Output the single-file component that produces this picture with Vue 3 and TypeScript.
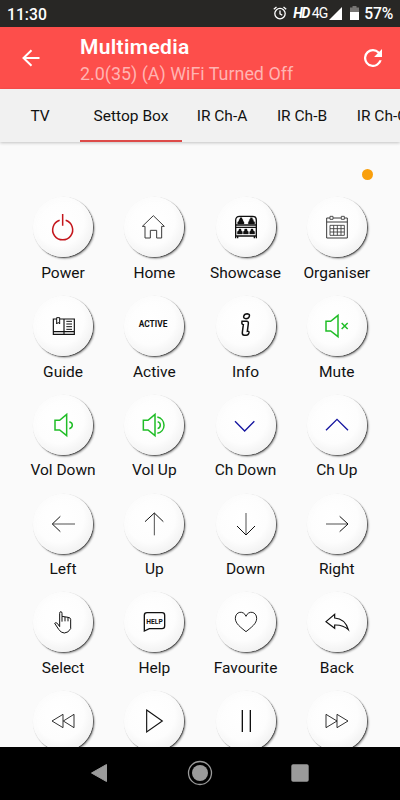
<script setup lang="ts">
interface Stroke {
  d: string
  w?: number
  fill?: boolean
}
interface RemoteKey {
  id: string
  label?: string
  tone?: 'red' | 'green' | 'blue' | 'soft'
  strokes: Stroke[]
  text?: { value: string; x: number; y: number; size: number; length: number }
}

const tabs: string[] = ['TV', 'Settop Box', 'IR Ch-A', 'IR Ch-B', 'IR Ch-C']
const activeTab = 'Settop Box'

// Icon paths are drawn around the origin, three units to a pixel.
const keys: RemoteKey[] = [
  { id: 'power', label: 'Power', tone: 'red', strokes: [{ d: 'M-10 -20 A30 30 0 1 0 8 -20 M-1 -39 V-4', w: 4.5 }] },
  { id: 'home', label: 'Home', tone: 'soft', strokes: [{ d: 'M-27 -2 H-35 L-2 -34 L31 -2 H23 V33 H8 V10 H-11 V33 H-27 Z', w: 3 }] },
  {
    id: 'showcase',
    label: 'Showcase',
    strokes: [
      { d: 'M-31 34 V-20 Q-31 -32 -19 -32 H19 Q31 -32 31 -20 V34 M-25 34 V25 M25 34 V25 M-31 -6 H31 M-31 1 H31 M-31 27 H31', w: 4 },
      { d: 'M-25 -9 V-15 L-21 -18 V-22 L-18 -24 V-28 H-12 V-24 L-9 -22 V-18 L-6 -15 V-9 Z M7 -9 V-15 L10 -18 V-22 L13 -24 V-28 H19 V-24 L22 -22 V-18 L26 -15 V-9 Z', fill: true, w: 1 },
      { d: 'M-26 21 V14 L-21 10 V6 H-15 V10 L-11 14 V21 Z M-8 21 V14 L-4 10 V6 H3 V10 L7 14 V21 Z M11 21 V14 L15 10 V6 H21 V10 L26 14 V21 Z', fill: true, w: 1 },
    ],
  },
  {
    id: 'organiser',
    label: 'Organiser',
    tone: 'soft',
    strokes: [
      { d: 'M-21 -27 H-31 V33 H31 V-27 H22 M-12 -27 H12 M-31 -15 H31', w: 3 },
      { d: 'M-21 -32 H-12 V-23 H-21 Z M13 -32 H22 V-23 H13 Z', w: 2.6 },
      { d: 'M-21 -5 H22 V25 H-21 Z M-10 -5 V25 M1 -5 V25 M12 -5 V25 M-21 5 H22 M-21 15 H22', w: 2.6 },
    ],
  },
  {
    id: 'guide',
    label: 'Guide',
    strokes: [
      { d: 'M-19 -21 H-29 V25 H34 V-21 H3 V25 M3 -21 H-9 M-29 17 H34', w: 3.5 },
      { d: 'M-19 -25 H-10 V-6 L-14.500 -11 L-19 -6 Z M10 -14 H27 M10 -6 H27 M10 2 H27 M10 10 H27', w: 3 },
    ],
  },
  { id: 'active', label: 'Active', strokes: [], text: { value: 'ACTIVE', x: -46, y: 4, size: 25, length: 86 } },
  {
    id: 'info',
    label: 'Info',
    strokes: [
      { d: 'M-7 -29 Q-5 -37 4 -37 Q12 -36 10 -29 Q8 -22 0 -22 Q-8 -22 -7 -29 Z', w: 4.5 },
      { d: 'M-12 -14 H2 Q8 -14 7 -7 L4 16 Q10 15 9 20 Q7 28 1 28 H-5 Q-12 27 -11 19 L-8 -4 Q-14 -4 -12 -14 Z', w: 4.5 },
    ],
  },
  { id: 'mute', label: 'Mute', tone: 'green', strokes: [{ d: 'M-33 -14 H-19 L3 -32 V32 L-19 15 H-33 Z M14 -9 L32 9 M32 -9 L14 9', w: 4.5 }] },
  { id: 'vol-down', label: 'Vol Down', tone: 'green', strokes: [{ d: 'M-24 -14 H-10 L11 -32 V32 L-10 15 H-24 Z M19 -10 Q28 -7 28 0 Q28 8 19 11', w: 4.5 }] },
  { id: 'vol-up', label: 'Vol Up', tone: 'green', strokes: [{ d: 'M-32 -14 H-18 L3 -32 V32 L-18 15 H-32 Z M11 -10 Q19 -7 19 0 Q19 8 11 11 M10 -24 A25 25 0 0 1 10 25', w: 4.5 }] },
  { id: 'ch-down', label: 'Ch Down', tone: 'blue', strokes: [{ d: 'M-33 -11 L-4 18 L25 -11', w: 4 }] },
  { id: 'ch-up', label: 'Ch Up', tone: 'blue', strokes: [{ d: 'M-33 16 L0 -17 L33 16', w: 4 }] },
  { id: 'left', label: 'Left', strokes: [{ d: 'M36 0 H-32', w: 2.2 }, { d: 'M-8 -23 L-32 0 L-8 23', w: 3 }] },
  { id: 'up', label: 'Up', strokes: [{ d: 'M1 34 V-33', w: 2.2 }, { d: 'M-27 -7 L1 -33 L28 -7', w: 3 }] },
  { id: 'down', label: 'Down', strokes: [{ d: 'M0 -33 V33', w: 2.2 }, { d: 'M-27 6 L0 33 L27 6', w: 3 }] },
  { id: 'right', label: 'Right', strokes: [{ d: 'M-33 0 H33', w: 2.2 }, { d: 'M8 -23 L33 0 L8 23', w: 3 }] },
  {
    id: 'select',
    label: 'Select',
    strokes: [
      { d: 'M-10 14 L-17 4 Q-22 0 -25 4 L-13 22 Q-6 33 4 33 Q16 33 23 20 V-8 Q22 -14 15 -14 L-3 -17 V-26 Q-3 -31 -6.500 -31 Q-10 -31 -10 -26 Z M-3 -17 V-1 M6 -15 V-2 M15 -14 V-2', w: 3 },
    ],
  },
  {
    id: 'help',
    label: 'Help',
    strokes: [{ d: 'M-29 27 V-20 Q-29 -28 -21 -28 H24 Q32 -28 32 -20 V12 Q32 20 24 20 H-14 Z', w: 4 }],
    text: { value: 'HELP', x: -23, y: 5, size: 24, length: 49 },
  },
  { id: 'favourite', label: 'Favourite', strokes: [{ d: 'M0 29 C-16 16 -32 5 -32 -11 C-32 -32 -7 -36 0 -17 C7 -36 32 -32 32 -11 C32 5 16 16 0 29 Z', w: 2.8 }] },
  { id: 'back', label: 'Back', strokes: [{ d: 'M-33 -1 L-7 -23 V-12 Q24 -10 34 23 Q18 8 -7 9 V19 Z', w: 3.6 }] },
  { id: 'rewind', strokes: [{ d: 'M-33 0 L0 -20 V20 Z M1 0 L33 -20 V20 Z', w: 2.6 }] },
  { id: 'play', strokes: [{ d: 'M-22 -33 L25 0 L-22 33 Z', w: 3.4 }] },
  { id: 'pause', strokes: [{ d: 'M-11 -33 V33 M13 -33 V33', w: 4 }] },
  { id: 'forward', strokes: [{ d: 'M-33 -20 L0 0 L-33 20 Z M0 -20 L33 0 L0 20 Z', w: 2.6 }] },
]
</script>

<template>
  <div class="screen">
    <div class="status">
      <span class="clock">11:30</span>
      <svg class="alarm" viewBox="0 0 14 14">
        <circle cx="7" cy="7.600" r="5.200" />
        <path d="M7 4.500 V7.800 L9.300 9.200 M.8 3.300 L3.500 1 M13.200 3.300 L10.500 1" />
      </svg>
      <span class="hd">HD</span>
      <span class="net">4G</span>
      <svg class="signal" viewBox="0 0 13 13"><path d="M13 0 V13 H0 Z" /></svg>
      <svg class="battery" viewBox="0 0 9 14">
        <path d="M2.500 0 H6.500 V1.500 H9 V6 H0 V1.500 H2.500 Z" fill="#777573" />
        <path d="M0 6 H9 V14 H0 Z" fill="#fff" />
      </svg>
      <span class="percent">57%</span>
    </div>

    <header class="bar">
      <svg class="back" viewBox="0 0 18 18"><path d="M17.500 9 H1.500 M9.500 1.200 L1.500 9 L9.500 16.800" /></svg>
      <div class="titles">
        <h1>Multimedia</h1>
        <p>2.0(35) (A) WiFi Turned Off</p>
      </div>
      <svg class="refresh" viewBox="4 4 16 16">
        <path d="M17.650 6.350A7.960 7.960 0 0 0 12 4a8 8 0 1 0 7.730 10h-2.080A6 6 0 1 1 12 6c1.660 0 3.140.690 4.220 1.780L13 11h7V4z" />
      </svg>
    </header>

    <nav class="tabs">
      <div v-for="tab in tabs" :key="tab" class="tab" :class="{ active: tab === activeTab }">{{ tab }}</div>
    </nav>

    <main class="body">
      <div class="indicator"><span class="dot"></span></div>
      <div class="grid">
        <div v-for="key in keys" :key="key.id" class="cell">
          <div class="knob">
            <svg class="icon" :class="key.tone" viewBox="-36 -36 72 72">
              <path v-for="(s, i) in key.strokes" :key="i" :d="s.d" :stroke-width="s.w" :class="{ solid: s.fill }" />
              <text
                v-if="key.text"
                :x="key.text.x"
                :y="key.text.y"
                :font-size="key.text.size"
                :textLength="key.text.length"
                lengthAdjust="spacingAndGlyphs"
              >{{ key.text.value }}</text>
            </svg>
          </div>
          <span v-if="key.label" class="label">{{ key.label }}</span>
        </div>
      </div>
    </main>

    <footer class="sysnav">
      <svg viewBox="0 0 26 26"><path d="M5.500 13 L20.500 4.500 V21.500 Z" stroke="#9b9b9b" stroke-linejoin="round" /></svg>
      <svg viewBox="0 0 26 26">
        <circle cx="13" cy="13" r="8" />
        <circle cx="13" cy="13" r="11.500" fill="none" stroke="#9b9b9b" stroke-width="1.300" />
      </svg>
      <svg viewBox="0 0 26 26"><rect x="4.300" y="4.300" width="17.400" height="17.400" rx="1.800" /></svg>
    </footer>
  </div>
</template>

<style>
body {
  margin: 0;
  overflow: hidden;
}
</style>

<style scoped>
.screen {
  width: 400px;
  height: 800px;
  display: flex;
  flex-direction: column;
  overflow: hidden;
  background: #fafafa;
  font-family: Roboto, "Liberation Sans", sans-serif;
  color: #111;
}
.status {
  flex: none;
  height: 26.500px;
  box-sizing: border-box;
  padding: 0 7px;
  display: flex;
  align-items: center;
  background: #282725;
  color: #fff;
}
.clock {
  flex: 1;
  font-size: 15.700px;
  font-weight: 500;
  padding-top: 2px;
}
.alarm {
  width: 14px;
  height: 14px;
  margin-right: 6px;
  fill: none;
  stroke: #fff;
  stroke-width: 1.300;
}
.hd {
  font-size: 14px;
  font-weight: 700;
  font-style: italic;
  letter-spacing: -1.200px;
  width: 18.500px;
}
.net {
  font-size: 14px;
  letter-spacing: -0.900px;
  width: 17.500px;
}
.signal {
  width: 13px;
  height: 13px;
  fill: #fff;
  margin-right: 8px;
}
.battery {
  width: 9px;
  height: 14px;
  margin-right: 5px;
}
.percent {
  font-size: 15.700px;
  font-weight: 500;
  letter-spacing: -0.200px;
  padding-top: 1px;
}
.bar {
  flex: none;
  height: 62.500px;
  display: flex;
  align-items: center;
  padding: 0 18px 0 22px;
  box-sizing: border-box;
  background: #fd4e4b;
  color: #fff;
}
.back {
  width: 18px;
  height: 18px;
  fill: none;
  stroke: #fff;
  stroke-width: 2;
}
.titles {
  flex: 1;
  padding: 5px 0 0 40px;
}
h1 {
  margin: 0;
  font-size: 21px;
  line-height: 27px;
  font-weight: 600;
  letter-spacing: 0.350px;
}
p {
  margin: 0;
  font-size: 17.900px;
  line-height: 26px;
  color: #ffb4b2;
}
.refresh {
  width: 18px;
  height: 18px;
  fill: #fff;
}
.tabs {
  flex: none;
  height: 53px;
  display: flex;
  background: #f1f1f1;
  box-shadow: 0 1px 3px rgba(0, 0, 0, 0.220);
  position: relative;
}
.tab {
  flex: none;
  width: 80px;
  box-sizing: border-box;
  border-bottom: 2px solid transparent;
  line-height: 54px;
  font-size: 15.500px;
  text-align: center;
  white-space: nowrap;
}
.tab.active {
  width: 102px;
  border-bottom-color: #dd4b49;
}
.body {
  flex: 1;
  min-height: 0;
  overflow: hidden;
}
.indicator {
  height: 55.300px;
  box-sizing: border-box;
  padding: 26.500px 27px 0 0;
  display: flex;
  justify-content: flex-end;
}
.dot {
  width: 11px;
  height: 11px;
  border-radius: 50%;
  background: #f99f0c;
}
.grid {
  display: grid;
  grid-template-columns: repeat(4, 91.250px);
  grid-auto-rows: 98.800px;
  padding-left: 17.400px;
}
.cell {
  display: flex;
  flex-direction: column;
  align-items: center;
}
.knob {
  width: 60px;
  height: 60px;
  border-radius: 50%;
  display: flex;
  align-items: center;
  justify-content: center;
  background: radial-gradient(circle at 44% 40%, #fff 0%, #fdfdfd 50%, #f3f3f3 72%, #e6e6e6 100%);
  box-shadow: 0.800px 0.800px 1px #444, 1.700px 1.700px 2px rgba(0, 0, 0, 0.320), inset 2px 3px 4px #fcfcfc;
}
.icon {
  width: 24px;
  height: 24px;
  overflow: visible;
  fill: none;
  stroke: #111;
}
.icon.soft {
  stroke: #3a3a3a;
}
.icon.red {
  stroke: #c4161c;
}
.icon.green {
  stroke: #20bd27;
}
.icon.blue {
  stroke: #1515a0;
}
.icon .solid {
  fill: #111;
}
.icon text {
  fill: #111;
  stroke: none;
  font-weight: 700;
}
.label {
  margin-top: 5.600px;
  font-size: 15.500px;
  line-height: 20px;
  white-space: nowrap;
}
.sysnav {
  flex: none;
  height: 53.300px;
  display: flex;
  align-items: center;
  justify-content: space-between;
  padding: 0 87px 0 86px;
  box-sizing: border-box;
  background: #000;
}
.sysnav svg {
  width: 26px;
  height: 26px;
  fill: #9b9b9b;
}
</style>
